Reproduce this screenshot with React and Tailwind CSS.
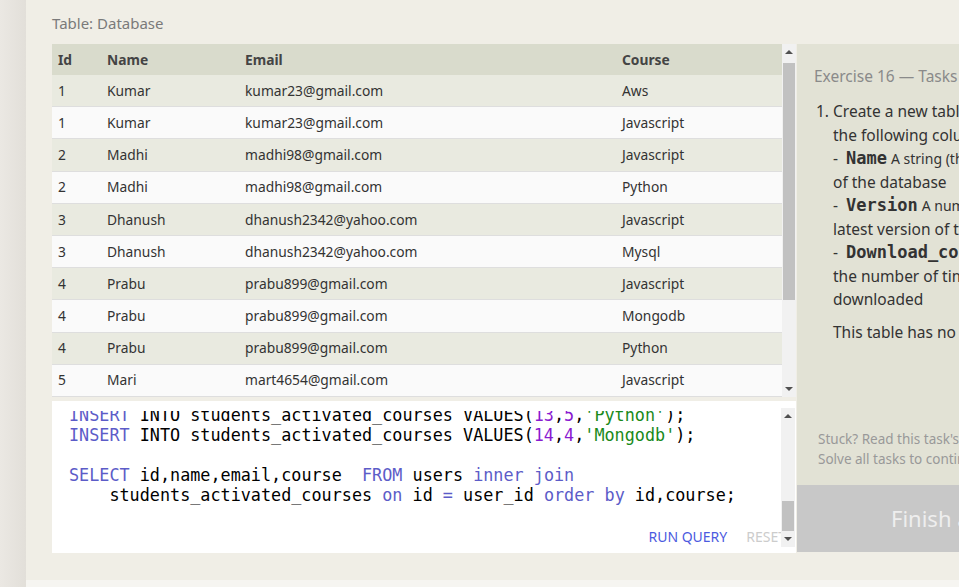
import React from 'react';

const rows = [
  ['1', 'Kumar', 'kumar23@gmail.com', 'Aws'],
  ['1', 'Kumar', 'kumar23@gmail.com', 'Javascript'],
  ['2', 'Madhi', 'madhi98@gmail.com', 'Javascript'],
  ['2', 'Madhi', 'madhi98@gmail.com', 'Python'],
  ['3', 'Dhanush', 'dhanush2342@yahoo.com', 'Javascript'],
  ['3', 'Dhanush', 'dhanush2342@yahoo.com', 'Mysql'],
  ['4', 'Prabu', 'prabu899@gmail.com', 'Javascript'],
  ['4', 'Prabu', 'prabu899@gmail.com', 'Mongodb'],
  ['4', 'Prabu', 'prabu899@gmail.com', 'Python'],
  ['5', 'Mari', 'mart4654@gmail.com', 'Javascript'],
  ['5', 'Mari', 'mart4654@gmail.com', 'Python'],
];

const sans = { fontFamily: '"Noto Sans", "Open Sans", sans-serif' };
const mono = { fontFamily: '"DejaVu Sans Mono", "Liberation Mono", monospace' };

const Kw = ({ children }) => <span className="text-[#5c5cc8]">{children}</span>;
const Num = ({ children }) => <span className="text-[#8a1ad0]">{children}</span>;
const Str = ({ children }) => <span className="text-[#1a8a1a]">{children}</span>;

const ScrollBar = ({ thumbTop, thumbHeight, className }) => (
  <div className={`relative w-[14px] shrink-0 bg-[#f1f1f1] ${className}`}>
    <div className="flex h-[16px] items-center justify-center">
      <div className="h-0 w-0 border-x-[4px] border-b-[4px] border-x-transparent border-b-[#505050]" />
    </div>
    <div
      className="absolute left-[1px] right-[1px] bg-[#c1c1c1]"
      style={{ top: thumbTop, height: thumbHeight }}
    />
    <div className="absolute bottom-0 flex h-[16px] w-full items-center justify-center">
      <div className="h-0 w-0 border-x-[4px] border-t-[4px] border-x-transparent border-t-[#505050]" />
    </div>
  </div>
);

// bold monospace column name inside the task text
const Col = ({ children }) => (
  <span className="ml-[8px] font-bold text-[17px] text-[#333]" style={mono}>{children}</span>
);

export default function App() {
  return (
    <div className="flex h-[587px] w-[959px] overflow-hidden bg-[#f0eee6]" style={sans}>
      <div className="h-full w-[26px] shrink-0 bg-gradient-to-r from-[#ebe8e3] to-[#e2dfd9]" />
      <div className="flex min-w-0 flex-1 flex-col">
        <div className="flex flex-1 flex-col pl-[26px]">
          <div className="flex h-[44px] items-center text-[15px] text-[#7a7a7a]">
            <span className="mt-[2px]">Table: Database</span>
          </div>
          <div className="flex gap-[1px]">
            <div className="flex w-[744px] shrink-0 flex-col gap-[4px]">
              <div className="flex h-[353px]">
                <div className="h-full w-[730px] overflow-hidden">
                  <div className="flex h-[31px] items-center bg-[#d9dbcc] pt-[2px] text-[13.8px] font-bold text-[#444]">
                    <div className="w-[55px] pl-[6px]">Id</div>
                    <div className="w-[138px]">Name</div>
                    <div className="w-[377px]">Email</div>
                    <div>Course</div>
                  </div>
                  {rows.map((r, i) => (
                    <div
                      key={i}
                      className={`flex h-[32.2px] items-center border-b border-[#dedede] pt-[1px] text-[13.8px] text-[#333] ${
                        i % 2 === 0 ? 'bg-[#e9eae0]' : 'bg-[#fafafa]'
                      }`}
                    >
                      <div className="w-[55px] pl-[6px]">{r[0]}</div>
                      <div className="w-[138px]">{r[1]}</div>
                      <div className="w-[377px]">{r[2]}</div>
                      <div>{r[3]}</div>
                    </div>
                  ))}
                </div>
                <ScrollBar thumbTop={19} thumbHeight={237} className="h-full" />
              </div>
              <div className="flex h-[152px] bg-white">
                <div className="min-w-0 flex-1 pl-[17px] pt-[10px]">
                  <div className="h-[107px] overflow-hidden">
                    <div className="-mt-[6px] whitespace-pre text-[16.8px] leading-[20px] text-black" style={mono}>
                      <div><Kw>INSERT</Kw> INTO students_activated_courses VALUES(<Num>13</Num>,<Num>5</Num>,<Str>'Python'</Str>);</div>
                      <div><Kw>INSERT</Kw> INTO students_activated_courses VALUES(<Num>14</Num>,<Num>4</Num>,<Str>'Mongodb'</Str>);</div>
                      <div>&nbsp;</div>
                      <div><Kw>SELECT</Kw> id,name,email,course  <Kw>FROM</Kw> users <Kw>inner</Kw> <Kw>join</Kw></div>
                      <div>    students_activated_courses <Kw>on</Kw> id <Kw>=</Kw> user_id <Kw>order</Kw> <Kw>by</Kw> id,course;</div>
                    </div>
                  </div>
                  <div className="-mr-[5px] flex justify-end gap-[19px] overflow-hidden pt-[8px] text-[14px]">
                    <span className="text-[#4c5ae0]">RUN QUERY</span>
                    <span className="text-[#cccccc]">RESET</span>
                  </div>
                </div>
                <ScrollBar thumbTop={93} thumbHeight={30} className="relative z-10 mr-[1px] mt-[7px] h-[139px]" />
              </div>
            </div>
            <div className="flex h-[508px] w-[400px] shrink-0 flex-col bg-[#e2e2d5]">
              <div className="flex-1 pl-[17px] pt-[21px]">
                <div className="text-[15.5px] text-[#8a8a8a]">Exercise 16 — Tasks</div>
                <div className="mt-[12px] flex text-[15.5px] leading-[23.5px] text-[#333]">
                  <span className="w-[19px] pl-[2px]">1.</span>
                  <div className="whitespace-nowrap">
                    <div>Create a new table named packages with</div>
                    <div>the following columns:</div>
                    <div>-<Col>Name</Col> <span className="text-[14px]">A string (the name</span></div>
                    <div>of the database</div>
                    <div>-<Col>Version</Col> <span className="text-[14px]">A number, the</span></div>
                    <div>latest version of the database</div>
                    <div>-<Col>Download_count</Col></div>
                    <div>the number of times it has been</div>
                    <div>downloaded</div>
                    <div className="mt-[9px]">This table has no constraints.</div>
                  </div>
                </div>
              </div>
              <div className="pb-[16px] pl-[21px] text-[13.5px] leading-[20px] text-[#999]">
                <div>Stuck? Read this task's solution.</div>
                <div>Solve all tasks to continue.</div>
              </div>
              <div className="flex h-[67px] items-center bg-[#c8c8c8] pl-[94px] text-[22px] text-[#eeeeee]">
                Finish and continue
              </div>
            </div>
          </div>
        </div>
        <div className="h-[7px] bg-[#f6f5f1]" />
      </div>
    </div>
  );
}
